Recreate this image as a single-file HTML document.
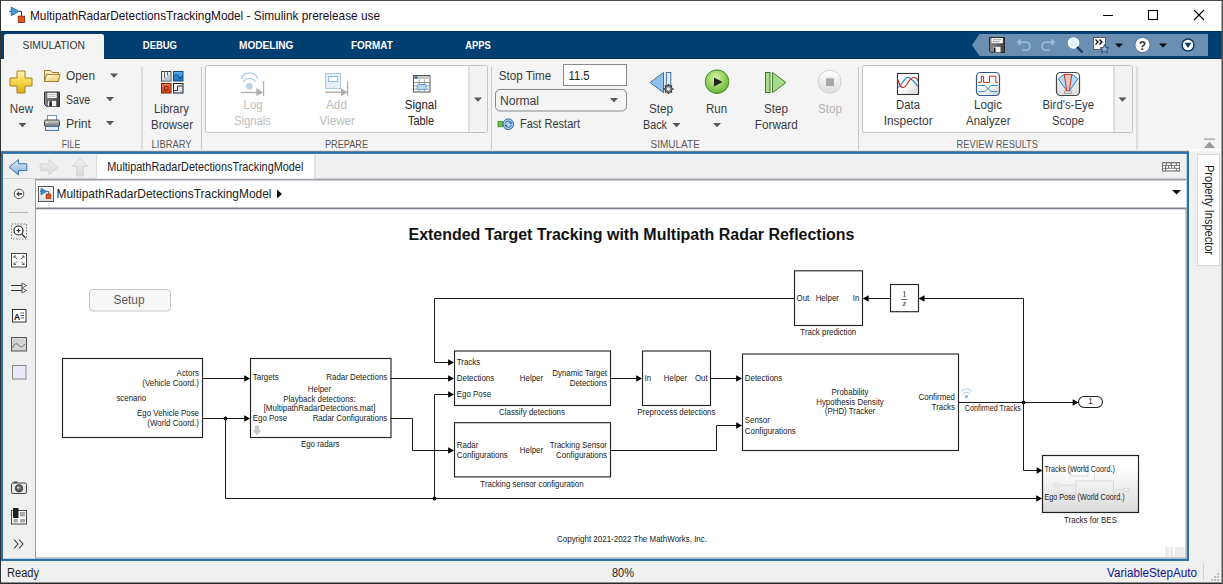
<!DOCTYPE html>
<html><head><meta charset="utf-8"><style>
html,body{margin:0;padding:0;width:1223px;height:584px;overflow:hidden;background:#f0f0f0}
svg{display:block;font-family:"Liberation Sans",sans-serif}
</style></head><body><svg width="1223" height="584" viewBox="0 0 1223 584" font-family="Liberation Sans, sans-serif"><rect x="0" y="0" width="1223" height="584" fill="#f0f0f0" stroke="none" stroke-width="1" rx="0" />
<rect x="0" y="0" width="1223" height="31" fill="#fff" stroke="none" stroke-width="1" rx="0" />
<rect x="0" y="0" width="1223" height="1" fill="#4a4a4a" stroke="none" stroke-width="1" rx="0" />
<path d="M9 11.4 H11" stroke="#444" stroke-width="1" fill="none" />
<path d="M11.2 7.2 L19 11.4 L11.2 15.6 Z" fill="#4a9ad8" stroke="#1a64a8" stroke-width="0.9"/>
<path d="M19 11.4 H21.5 V16" stroke="#333" stroke-width="1" fill="none" />
<rect x="18.3" y="16.2" width="6.3" height="6.3" fill="#e8581e" stroke="#8a2608" stroke-width="0.9" rx="0" />
<text x="30" y="20" font-size="12.6" fill="#1b0d18" text-anchor="start" font-weight="400" textLength="350" lengthAdjust="spacingAndGlyphs" >MultipathRadarDetectionsTrackingModel - Simulink prerelease use</text>
<rect x="1103" y="15" width="10" height="1" fill="#000" stroke="none" stroke-width="1" rx="0" />
<rect x="1148.5" y="10.5" width="9" height="9" fill="none" stroke="#000" stroke-width="1.1" rx="0" />
<path d="M1194 10 L1204 20 M1204 10 L1194 20" stroke="#000" stroke-width="1.1" fill="none" />
<rect x="0" y="31" width="1223" height="28" fill="#013e71" stroke="none" stroke-width="1" rx="0" />
<rect x="0" y="31" width="1223" height="1" fill="#00335f" stroke="none" stroke-width="1" rx="0" />
<rect x="0" y="58" width="1223" height="1" fill="#00345f" stroke="none" stroke-width="1" rx="0" />
<rect x="4" y="34" width="100" height="25" fill="#f4f4f4" stroke="none" stroke-width="1" rx="2" />
<rect x="4" y="50" width="100" height="9" fill="#f4f4f4" stroke="none" stroke-width="1" rx="0" />
<text x="22.5" y="48.7" font-size="10.8" fill="#333" text-anchor="start" font-weight="400" textLength="62.5" lengthAdjust="spacingAndGlyphs" >SIMULATION</text>
<text x="142.8" y="48.7" font-size="10.8" fill="#fff" text-anchor="start" font-weight="700" textLength="34.2" lengthAdjust="spacingAndGlyphs" >DEBUG</text>
<text x="239" y="48.7" font-size="10.8" fill="#fff" text-anchor="start" font-weight="700" textLength="54.4" lengthAdjust="spacingAndGlyphs" >MODELING</text>
<text x="351" y="48.7" font-size="10.8" fill="#fff" text-anchor="start" font-weight="700" textLength="41.7" lengthAdjust="spacingAndGlyphs" >FORMAT</text>
<text x="465.3" y="48.7" font-size="10.8" fill="#fff" text-anchor="start" font-weight="700" textLength="25.5" lengthAdjust="spacingAndGlyphs" >APPS</text>
<path d="M979.5 34 H1208 V56 H979.5 L972 45 Z" fill="#6a8fb0" />
<path d="M989.5 37.5 H1004.5 V52.5 H991 L989.5 51 Z" fill="url(#flpg)" stroke="#222" stroke-width="0.9"/>
<rect x="991.5" y="38" width="11.3" height="5.2" fill="#fafafa" stroke="none" stroke-width="1" rx="0" />
<path d="M993 39.7 H1001 M993 41.7 H999.5" stroke="#777" stroke-width="0.7" fill="none" />
<rect x="993" y="46.8" width="7.5" height="5.5" fill="#f0f0f0" stroke="none" stroke-width="1" rx="0" />
<rect x="993.6" y="47.5" width="1.9" height="4.8" fill="#111" stroke="none" stroke-width="1" rx="0" />
<path d="M1018 42.2 H1026 A4 4 0 0 1 1026 50.3 H1022" stroke="#9cc0de" stroke-width="1.6" fill="none" />
<path d="M1016.5 42.2 L1020.8 38.6 V45.8 Z" fill="#9cc0de" />
<path d="M1054 42.2 H1046 A4 4 0 0 0 1046 50.3 H1050" stroke="#9cc0de" stroke-width="1.6" fill="none" />
<path d="M1055.5 42.2 L1051.2 38.6 V45.8 Z" fill="#9cc0de" />
<circle cx="1073.5" cy="43" r="5" fill="#e8f0f8" stroke="#fff" stroke-width="1.6"/>
<path d="M1077 47 L1082.5 52.5" stroke="#1a3a66" stroke-width="2.4" fill="none" />
<rect x="1093.5" y="37.5" width="12" height="12" fill="#fff" stroke="#444" stroke-width="0.8" rx="0" />
<path d="M1095.5 39.5 L1098 42 L1095.5 44.5 M1099.5 39.5 L1102 42 L1099.5 44.5" stroke="#000" stroke-width="1.4" fill="none" />
<path d="M1104.5 44.5 L1105.8 47.6 L1109 47.8 L1106.5 49.8 L1107.5 53 L1104.5 51.1 L1101.5 53 L1102.5 49.8 L1100 47.8 L1103.2 47.6 Z" fill="#8fb4d8" stroke="#24446a" stroke-width="0.9"/>
<path d="M1115 43.5 H1123 L1119 47.5 Z" fill="#000" />
<circle cx="1142.5" cy="45" r="7.5" fill="#fff" stroke="#24446a" stroke-width="0.6"/>
<text x="1142.5" y="49.5" font-size="12" fill="#333" text-anchor="middle" font-weight="700" >?</text>
<path d="M1159 43.5 H1167 L1163 47.5 Z" fill="#000" />
<circle cx="1188" cy="45" r="6" fill="#fff" stroke="#0b3c6e" stroke-width="1.5"/>
<path d="M1184.5 42.8 H1191.5 L1188 48 Z" fill="#0b3c6e" />
<rect x="0" y="59" width="1223" height="93" fill="#f4f4f4" stroke="none" stroke-width="1" rx="0" />
<rect x="0" y="59" width="1" height="93" fill="#3a3a3a" stroke="none" stroke-width="1" rx="0" />
<rect x="141.5" y="67" width="1" height="83" fill="#c8c8c8" stroke="none" stroke-width="1" rx="0" />
<rect x="201" y="67" width="1" height="83" fill="#c8c8c8" stroke="none" stroke-width="1" rx="0" />
<rect x="491" y="67" width="1" height="83" fill="#c8c8c8" stroke="none" stroke-width="1" rx="0" />
<rect x="858" y="67" width="1" height="83" fill="#c8c8c8" stroke="none" stroke-width="1" rx="0" />
<rect x="1136.5" y="67" width="1" height="83" fill="#c8c8c8" stroke="none" stroke-width="1" rx="0" />
<text x="61.7" y="148" font-size="10.8" fill="#585858" text-anchor="start" font-weight="400" textLength="18.7" lengthAdjust="spacingAndGlyphs" >FILE</text>
<text x="151.6" y="148" font-size="10.8" fill="#585858" text-anchor="start" font-weight="400" textLength="40" lengthAdjust="spacingAndGlyphs" >LIBRARY</text>
<text x="325" y="148" font-size="10.8" fill="#585858" text-anchor="start" font-weight="400" textLength="43" lengthAdjust="spacingAndGlyphs" >PREPARE</text>
<text x="650.6" y="148" font-size="10.8" fill="#585858" text-anchor="start" font-weight="400" textLength="49.2" lengthAdjust="spacingAndGlyphs" >SIMULATE</text>
<text x="956.5" y="148" font-size="10.8" fill="#585858" text-anchor="start" font-weight="400" textLength="81.5" lengthAdjust="spacingAndGlyphs" >REVIEW RESULTS</text>
<defs><linearGradient id="plusg" x1="0" y1="0" x2="0" y2="1"><stop offset="0" stop-color="#fff6b8"/><stop offset="0.55" stop-color="#f5d240"/><stop offset="1" stop-color="#e0a818"/></linearGradient><linearGradient id="foldg" x1="0" y1="0" x2="1" y2="1"><stop offset="0" stop-color="#fffbe0"/><stop offset="1" stop-color="#e8c860"/></linearGradient><linearGradient id="prng" x1="0" y1="0" x2="0" y2="1"><stop offset="0" stop-color="#d8d8d8"/><stop offset="1" stop-color="#6a6a6a"/></linearGradient><linearGradient id="flpg" x1="0" y1="0" x2="1" y2="0"><stop offset="0" stop-color="#8a8a8a"/><stop offset="1" stop-color="#404040"/></linearGradient></defs>
<path d="M17 71 H25 V78 H32 V86 H25 V93 H17 V86 H10 V78 H17 Z" fill="url(#plusg)" stroke="#a8801a" stroke-width="1"/>
<text x="9.8" y="112.8" font-size="12" fill="#3a3a3a" text-anchor="start" font-weight="400" textLength="23.3" lengthAdjust="spacingAndGlyphs" >New</text>
<path d="M18.5 123 H26.5 L22.5 127.3 Z" fill="#555" />
<path d="M44.5 70.5 H50.5 L52.5 72.5 H58.5 V81.5 H44.5 Z" fill="#f4e6b0" stroke="#9a7a30" stroke-width="1"/>
<path d="M46.5 74.5 H60 L58.5 81.5 H44.5 Z" fill="url(#foldg)" stroke="#9a7a30" stroke-width="0.9"/>
<text x="66" y="80.3" font-size="12" fill="#3a3a3a" text-anchor="start" font-weight="400" textLength="29" lengthAdjust="spacingAndGlyphs" >Open</text>
<path d="M110 73.5 H118 L114 77.8 Z" fill="#555" />
<path d="M44.5 92 H59.5 V106.5 H46.5 L44.5 104.5 Z" fill="url(#flpg)" stroke="#333" stroke-width="1"/>
<rect x="47" y="92.5" width="10" height="5.8" fill="#fafafa" stroke="#555" stroke-width="0.6" rx="0" />
<path d="M48.5 94.3 H55.5 M48.5 96.3 H55.5" stroke="#999" stroke-width="0.7" fill="none" />
<rect x="47.5" y="100.5" width="9" height="6" fill="#f0f0f0" stroke="#444" stroke-width="0.6" rx="0" />
<rect x="49.3" y="101.3" width="2.6" height="5" fill="#222" stroke="none" stroke-width="1" rx="0" />
<text x="66" y="103.5" font-size="12" fill="#3a3a3a" text-anchor="start" font-weight="400" textLength="24" lengthAdjust="spacingAndGlyphs" >Save</text>
<path d="M106 97 H114 L110 101.3 Z" fill="#555" />
<rect x="47.5" y="115.5" width="9" height="5" fill="#fff" stroke="#6a90c0" stroke-width="0.9" rx="0" />
<rect x="44.5" y="120" width="15" height="6.5" fill="url(#prng)" stroke="#444" stroke-width="1" rx="1.5" />
<rect x="46" y="122" width="1.5" height="1" fill="#fff" stroke="none" stroke-width="1" rx="0" />
<rect x="45.5" y="126.5" width="13" height="4" fill="#dfeaf6" stroke="#3a6ab0" stroke-width="0.9" rx="0" />
<text x="66" y="127.5" font-size="12" fill="#3a3a3a" text-anchor="start" font-weight="400" textLength="25" lengthAdjust="spacingAndGlyphs" >Print</text>
<path d="M106 121 H114 L110 125.3 Z" fill="#555" />
<defs><linearGradient id="lbw" x1="0" y1="0" x2="1" y2="1"><stop offset="0" stop-color="#ffffff"/><stop offset="1" stop-color="#c8d4e0"/></linearGradient><linearGradient id="lbb" x1="0" y1="0" x2="0" y2="1"><stop offset="0" stop-color="#5ab0f0"/><stop offset="1" stop-color="#1a6cc0"/></linearGradient><linearGradient id="lbr" x1="0" y1="0" x2="0" y2="1"><stop offset="0" stop-color="#f08050"/><stop offset="1" stop-color="#d04010"/></linearGradient></defs>
<rect x="161.5" y="71.5" width="9.5" height="9.5" fill="url(#lbw)" stroke="#444" stroke-width="1" rx="0" />
<path d="M162 80.5 L170.5 74 V80.5 Z" fill="#b8c4d0" />
<path d="M164.5 72 V78 M167.5 72 V75.5" stroke="#444" stroke-width="0.8" fill="none" />
<rect x="173.5" y="71.5" width="9.5" height="9.5" fill="url(#lbb)" stroke="#0e4f8a" stroke-width="1" rx="0" />
<path d="M174.5 76.5 Q176.5 72.5 178.2 76.5 T182 76.5" stroke="#0a2a50" stroke-width="0.8" fill="none" />
<rect x="161.5" y="83.5" width="9.5" height="9.5" fill="url(#lbr)" stroke="#7a2008" stroke-width="1" rx="0" />
<rect x="164.5" y="86.5" width="3.5" height="3.5" fill="none" stroke="#7a2008" stroke-width="0.9" rx="0" />
<rect x="173.5" y="83.5" width="9.5" height="9.5" fill="url(#lbw)" stroke="#222" stroke-width="1" rx="0" />
<path d="M174 90.5 H177.5 V86 H182.5" stroke="#222" stroke-width="0.9" fill="none" />
<text x="154" y="113" font-size="12" fill="#3a3a3a" text-anchor="start" font-weight="400" textLength="35" lengthAdjust="spacingAndGlyphs" >Library</text>
<text x="151" y="128.8" font-size="12" fill="#3a3a3a" text-anchor="start" font-weight="400" textLength="42" lengthAdjust="spacingAndGlyphs" >Browser</text>
<rect x="205.5" y="65.5" width="282" height="67" fill="#fff" stroke="#c4c4c4" stroke-width="1" rx="2" />
<rect x="469" y="66" width="18" height="66" fill="#f3f3f3" stroke="none" stroke-width="1" rx="2.5" />
<rect x="468.5" y="66" width="1" height="66" fill="#c4c4c4" stroke="none" stroke-width="1" rx="0" />
<path d="M474 97.5 H482 L478 101.8 Z" fill="#555" />
<circle cx="249.4" cy="86.3" r="3.3" fill="#b8d4ec"/>
<path d="M241.2 78.8 A8.8 8.8 0 0 1 257.9 78.8" stroke="#a8cce8" stroke-width="1.3" fill="none" />
<path d="M243.4 82 A6.9 6.9 0 0 1 255.6 82" stroke="#a8cce8" stroke-width="1.3" fill="none" />
<path d="M241 92.5 H257" stroke="#b0b0b0" stroke-width="1.4" fill="none" />
<path d="M256.3 88 L263.2 92.4 L256.3 96 Z" fill="#b0b0b0" />
<rect x="263" y="81" width="1.2" height="15" fill="#b0b0b0" stroke="none" stroke-width="1" rx="0" />
<text x="243.6" y="109.2" font-size="12" fill="#bcbcbc" text-anchor="start" font-weight="400" textLength="19" lengthAdjust="spacingAndGlyphs" >Log</text>
<text x="234" y="125" font-size="12" fill="#bcbcbc" text-anchor="start" font-weight="400" textLength="37" lengthAdjust="spacingAndGlyphs" >Signals</text>
<rect x="325.5" y="73.5" width="15" height="15" fill="#e6eef6" stroke="#a9c8e4" stroke-width="1" rx="0" />
<rect x="328.5" y="76.5" width="9" height="5" fill="#fff" stroke="#8fbce4" stroke-width="1" rx="0" />
<path d="M325 92.3 H342" stroke="#b0b0b0" stroke-width="1.4" fill="none" />
<path d="M341 88.3 L347.5 92.3 L341 96.3 Z" fill="#b0b0b0" />
<rect x="347" y="81" width="1.2" height="15" fill="#b0b0b0" stroke="none" stroke-width="1" rx="0" />
<text x="326" y="109.2" font-size="12" fill="#bcbcbc" text-anchor="start" font-weight="400" textLength="21" lengthAdjust="spacingAndGlyphs" >Add</text>
<text x="319.5" y="125" font-size="12" fill="#bcbcbc" text-anchor="start" font-weight="400" textLength="35.5" lengthAdjust="spacingAndGlyphs" >Viewer</text>
<rect x="413.5" y="75.5" width="16.5" height="16.5" fill="#fff" stroke="#555" stroke-width="1" rx="0" />
<rect x="414" y="76" width="15.5" height="3" fill="#c8c8c8" stroke="none" stroke-width="1" rx="0" />
<rect x="414.5" y="76.5" width="3" height="2" fill="#1f5fb0" stroke="none" stroke-width="1" rx="0" />
<path d="M414 82.5 H430 M414 86 H430 M414 89.2 H430 M419.2 79.5 V92 M424.7 79.5 V92" stroke="#8c8c8c" stroke-width="0.9" fill="none" />
<rect x="417.3" y="84.5" width="8.7" height="5" fill="#b8d8f4" stroke="#5aa0e8" stroke-width="1" rx="1" />
<text x="404.8" y="109.2" font-size="12" fill="#222" text-anchor="start" font-weight="400" textLength="32" lengthAdjust="spacingAndGlyphs" >Signal</text>
<text x="408" y="125" font-size="12" fill="#222" text-anchor="start" font-weight="400" textLength="26" lengthAdjust="spacingAndGlyphs" >Table</text>
<text x="498.7" y="80.2" font-size="12" fill="#3a3a3a" text-anchor="start" font-weight="400" textLength="52.5" lengthAdjust="spacingAndGlyphs" >Stop Time</text>
<rect x="563.5" y="64.5" width="63" height="21" fill="#fff" stroke="#8a8a8a" stroke-width="1" rx="0" />
<text x="568.6" y="79.5" font-size="12.5" fill="#222" text-anchor="start" font-weight="400" textLength="21" lengthAdjust="spacingAndGlyphs" >11.5</text>
<rect x="495.5" y="89.5" width="131" height="21.5" fill="#f4f4f4" stroke="#7c7c7c" stroke-width="0.9" rx="4.5" />
<text x="500" y="105" font-size="12" fill="#3a3a3a" text-anchor="start" font-weight="400" textLength="39" lengthAdjust="spacingAndGlyphs" >Normal</text>
<path d="M610 98 H618 L614 102.3 Z" fill="#555" />
<rect x="498" y="121.6" width="4.5" height="5.2" fill="#6fc04a" stroke="#2f7a1e" stroke-width="0.7" rx="0" />
<circle cx="508.3" cy="124.2" r="5.3" fill="#a9d2f2" stroke="#2d5f9a" stroke-width="1"/>
<path d="M505 123.5 A3.3 3 0 0 1 511.3 123 M511.6 125 A3.3 3 0 0 1 505.3 125.4" stroke="#2d5f9a" stroke-width="0.9" fill="none" />
<path d="M510 121.3 L512.3 123.4 L509.6 124 Z" fill="#2d5f9a" />
<path d="M506.6 127.2 L504.3 125 L507 124.4 Z" fill="#2d5f9a" />
<text x="520" y="128.3" font-size="12" fill="#3a3a3a" text-anchor="start" font-weight="400" textLength="60" lengthAdjust="spacingAndGlyphs" >Fast Restart</text>
<path d="M650 82.5 L663.5 72.5 V92.6 Z" fill="#8ec2ea" stroke="#3f6f9a" stroke-width="1"/>
<rect x="666.3" y="72.5" width="4.5" height="16" fill="#dcecf8" stroke="#3f6f9a" stroke-width="1" rx="0" />
<path d="M671.70 89.00 L673.50 89.00 M670.76 91.26 L672.04 92.54 M668.50 92.20 L668.50 94.00 M666.24 91.26 L664.96 92.54 M665.30 89.00 L663.50 89.00 M666.24 86.74 L664.96 85.46 M668.50 85.80 L668.50 84.00 M670.76 86.74 L672.04 85.46 " stroke="#333" stroke-width="1.6" fill="none" />
<circle cx="668.5" cy="89" r="3.6" fill="#8a8a8a" stroke="#333" stroke-width="0.9"/>
<circle cx="668.5" cy="89" r="1.4" fill="#fff"/>
<text x="649" y="113" font-size="12" fill="#3a3a3a" text-anchor="start" font-weight="400" textLength="24" lengthAdjust="spacingAndGlyphs" >Step</text>
<text x="643" y="128.7" font-size="12" fill="#3a3a3a" text-anchor="start" font-weight="400" textLength="24" lengthAdjust="spacingAndGlyphs" >Back</text>
<path d="M672.5 123 H680.5 L676.5 127.3 Z" fill="#555" />
<defs><radialGradient id="rg" cx="0.45" cy="0.35" r="0.7"><stop offset="0" stop-color="#d9f5a8"/><stop offset="1" stop-color="#5fb32a"/></radialGradient><linearGradient id="lg1" x1="0" y1="0" x2="0" y2="1"><stop offset="0" stop-color="#ffffff"/><stop offset="1" stop-color="#dcdcdc"/></linearGradient><linearGradient id="bes" x1="0" y1="0" x2="0" y2="1"><stop offset="0" stop-color="#ffffff"/><stop offset="0.2" stop-color="#ffffff"/><stop offset="1" stop-color="#dadada"/></linearGradient></defs>
<circle cx="717" cy="81.7" r="11.8" fill="url(#rg)" stroke="#3f8a22" stroke-width="1"/>
<path d="M714 77.5 L722.5 82 L714 86.5 Z" fill="#222" />
<text x="706" y="113" font-size="12" fill="#3a3a3a" text-anchor="start" font-weight="400" textLength="21" lengthAdjust="spacingAndGlyphs" >Run</text>
<path d="M713 123 H721 L717 127.3 Z" fill="#555" />
<rect x="765.5" y="72.5" width="4.5" height="20" fill="#a8dc88" stroke="#3f7a2a" stroke-width="1" rx="0" />
<path d="M772.5 72.5 L786 82.5 L772.5 92.6 Z" fill="#a8dc88" stroke="#3f7a2a" stroke-width="1"/>
<text x="764" y="113" font-size="12" fill="#3a3a3a" text-anchor="start" font-weight="400" textLength="24" lengthAdjust="spacingAndGlyphs" >Step</text>
<text x="754.8" y="128.7" font-size="12" fill="#3a3a3a" text-anchor="start" font-weight="400" textLength="43" lengthAdjust="spacingAndGlyphs" >Forward</text>
<circle cx="829.7" cy="81.7" r="11.5" fill="url(#lg1)" stroke="#d0d0d0" stroke-width="1"/>
<rect x="826" y="78.3" width="8" height="7.7" fill="#a8a8a8" stroke="none" stroke-width="1" rx="0" />
<text x="818" y="113" font-size="12" fill="#b4b4b4" text-anchor="start" font-weight="400" textLength="24" lengthAdjust="spacingAndGlyphs" >Stop</text>
<rect x="862.5" y="65.5" width="270" height="67" fill="#fff" stroke="#c4c4c4" stroke-width="1" rx="2" />
<rect x="1114" y="66" width="18" height="66" fill="#f3f3f3" stroke="none" stroke-width="1" rx="2.5" />
<rect x="1113.5" y="66" width="1" height="66" fill="#c4c4c4" stroke="none" stroke-width="1" rx="0" />
<path d="M1118.5 97.5 H1126.5 L1122.5 101.8 Z" fill="#555" />
<defs><linearGradient id="dig" x1="0" y1="0" x2="1" y2="1"><stop offset="0" stop-color="#ffffff"/><stop offset="0.5" stop-color="#ffffff"/><stop offset="1" stop-color="#d0d0d0"/></linearGradient></defs>
<rect x="897.5" y="73.5" width="21" height="21" fill="url(#dig)" stroke="#333" stroke-width="1.1" rx="0" />
<path d="M898 87.3 C901 87, 904 77.3, 907.8 77.3 C911 77.3, 915 83, 918 86.4" stroke="#2f86d0" stroke-width="1.2" fill="none" />
<path d="M898 80 C899.5 86, 901 87.5, 903 87.5 C907 87.5, 909 77.5, 913.5 77.5 C916 77.5, 917.5 79.5, 918 81" stroke="#c0281c" stroke-width="1.2" fill="none" />
<text x="896" y="109.2" font-size="12" fill="#3a3a3a" text-anchor="start" font-weight="400" textLength="24" lengthAdjust="spacingAndGlyphs" >Data</text>
<text x="883.7" y="125" font-size="12" fill="#3a3a3a" text-anchor="start" font-weight="400" textLength="49" lengthAdjust="spacingAndGlyphs" >Inspector</text>
<rect x="976.5" y="72.5" width="23" height="23" fill="url(#dig)" stroke="#2a5a92" stroke-width="1.2" rx="4" />
<path d="M978.2 82.4 H981.3 V76.2 H983.6 V82.4 H989.5 V76.2 H995.8 V82.4 H997.7" stroke="#c8281e" stroke-width="1" fill="none" />
<path d="M978.2 85.5 H984.9 L991 91.6 H997.7 M978.2 91.6 H984.9 L991 85.5 H997.7" stroke="#2f86d0" stroke-width="1" fill="none" />
<text x="974" y="109.2" font-size="12" fill="#3a3a3a" text-anchor="start" font-weight="400" textLength="28" lengthAdjust="spacingAndGlyphs" >Logic</text>
<text x="966" y="125" font-size="12" fill="#3a3a3a" text-anchor="start" font-weight="400" textLength="44.5" lengthAdjust="spacingAndGlyphs" >Analyzer</text>
<defs><linearGradient id="beg" x1="0" y1="0" x2="0" y2="1"><stop offset="0" stop-color="#ffffff"/><stop offset="1" stop-color="#dcdcdc"/></linearGradient></defs>
<rect x="1056.5" y="72.5" width="23" height="23" fill="url(#beg)" stroke="#444" stroke-width="1.2" rx="4" />
<path d="M1058.3 78.8 L1063 75.3 H1073.5 L1077.8 78.8 L1069.5 90.8 H1066.8 Z" fill="#b4def8" stroke="#2a84d4" stroke-width="1"/>
<path d="M1064.3 74.5 H1071.8 L1069.3 90.8 H1066.8 Z" fill="#ecc4bc" stroke="#d43a22" stroke-width="1.1"/>
<rect x="1064.5" y="91" width="7" height="2.4" fill="#d8d8d8" stroke="#888" stroke-width="0.6" rx="0" />
<text x="1042.5" y="109.2" font-size="12" fill="#3a3a3a" text-anchor="start" font-weight="400" textLength="51.5" lengthAdjust="spacingAndGlyphs" >Bird's-Eye</text>
<text x="1052" y="125" font-size="12" fill="#3a3a3a" text-anchor="start" font-weight="400" textLength="32" lengthAdjust="spacingAndGlyphs" >Scope</text>
<path d="M1204 148 L1209.5 141.5 L1215 148 Z" fill="#999" />
<rect x="1204" y="138.5" width="11" height="1.2" fill="#999" stroke="none" stroke-width="1" rx="0" />
<rect x="0" y="149.5" width="1223" height="1.3" fill="#ffffff" stroke="none" stroke-width="1" rx="0" />
<rect x="1" y="150.8" width="1188" height="1" fill="#6e6e6e" stroke="none" stroke-width="1" rx="0" />
<rect x="1" y="151.7" width="1188" height="2.2" fill="#2a70aa" stroke="none" stroke-width="1" rx="0" />
<rect x="1" y="152" width="2" height="409" fill="#2a70aa" stroke="none" stroke-width="1" rx="0" />
<rect x="1186.5" y="152" width="2.5" height="409" fill="#2a70aa" stroke="none" stroke-width="1" rx="0" />
<rect x="1" y="558.5" width="1188" height="2.5" fill="#2a70aa" stroke="none" stroke-width="1" rx="0" />
<rect x="0" y="0" width="1" height="584" fill="#333" stroke="none" stroke-width="1" rx="0" />
<rect x="3" y="154" width="1183.5" height="25" fill="#f0f0f0" stroke="none" stroke-width="1" rx="0" />
<rect x="3" y="178" width="1183.5" height="1" fill="#d0d0d0" stroke="none" stroke-width="1" rx="0" />
<defs><linearGradient id="navg" x1="0" y1="0" x2="0" y2="1"><stop offset="0" stop-color="#e4f0fa"/><stop offset="1" stop-color="#80b0dc"/></linearGradient><linearGradient id="navd" x1="0" y1="0" x2="0" y2="1"><stop offset="0" stop-color="#f0f0f0"/><stop offset="1" stop-color="#d8d8d8"/></linearGradient></defs>
<path d="M9.2 167.3 L18.5 159.5 V163.8 H26.8 V170.6 H18.5 V175 Z" fill="url(#navg)" stroke="#3c70a8" stroke-width="1"/>
<path d="M58 167.3 L49 159.5 V163.8 H40.2 V170.6 H49 V175 Z" fill="url(#navd)" stroke="#d4d4d4" stroke-width="1"/>
<path d="M80 158 L88 166.5 H83.5 V176 H76.5 V166.5 H72 Z" fill="url(#navd)" stroke="#d4d4d4" stroke-width="1"/>
<rect x="96" y="155" width="218.5" height="23.5" fill="#fff" stroke="none" stroke-width="1" rx="0" />
<rect x="96" y="155" width="1" height="23" fill="#dcdcdc" stroke="none" stroke-width="1" rx="0" />
<rect x="314.5" y="155" width="1" height="23" fill="#d0d0d0" stroke="none" stroke-width="1" rx="0" />
<text x="107.3" y="171" font-size="12" fill="#222" text-anchor="start" font-weight="400" textLength="196" lengthAdjust="spacingAndGlyphs" >MultipathRadarDetectionsTrackingModel</text>
<rect x="1162" y="162" width="18" height="9.6" fill="#7a7a7a" stroke="none" stroke-width="1" rx="0" />
<rect x="1163" y="163.4" width="2.8" height="1.6" fill="#fff" stroke="none" stroke-width="1" rx="0" />
<rect x="1167" y="163.4" width="3.5" height="1.6" fill="#fff" stroke="none" stroke-width="1" rx="0" />
<rect x="1172" y="163.4" width="3.8" height="1.6" fill="#fff" stroke="none" stroke-width="1" rx="0" />
<rect x="1177" y="163.4" width="2" height="1.6" fill="#fff" stroke="none" stroke-width="1" rx="0" />
<rect x="1163" y="166" width="2" height="1.8" fill="#fff" stroke="none" stroke-width="1" rx="0" />
<rect x="1166.2" y="166" width="1.8" height="1.8" fill="#fff" stroke="none" stroke-width="1" rx="0" />
<rect x="1169" y="166" width="2" height="1.8" fill="#fff" stroke="none" stroke-width="1" rx="0" />
<rect x="1172" y="166" width="2" height="1.8" fill="#fff" stroke="none" stroke-width="1" rx="0" />
<rect x="1175.2" y="166" width="3.8" height="1.8" fill="#fff" stroke="none" stroke-width="1" rx="0" />
<rect x="1163" y="168.8" width="2" height="1.6" fill="#fff" stroke="none" stroke-width="1" rx="0" />
<rect x="1166.2" y="168.8" width="9.6" height="1.6" fill="#fff" stroke="none" stroke-width="1" rx="0" />
<rect x="1177" y="168.8" width="2" height="1.6" fill="#fff" stroke="none" stroke-width="1" rx="0" />
<rect x="3" y="179" width="32" height="379.5" fill="#f0f0f0" stroke="none" stroke-width="1" rx="0" />
<rect x="35" y="179" width="1" height="379.5" fill="#a0a0a0" stroke="none" stroke-width="1" rx="0" />
<rect x="36" y="179.5" width="1150.5" height="28.5" fill="#fff" stroke="none" stroke-width="1" rx="0" />
<rect x="36" y="179" width="1150.5" height="1.5" fill="#9aa0a8" stroke="none" stroke-width="1" rx="0" />
<rect x="36" y="207.5" width="1150.5" height="2" fill="#7c828c" stroke="none" stroke-width="1" rx="0" />
<rect x="38.5" y="186.5" width="15" height="15" fill="url(#beg)" stroke="#555" stroke-width="1" rx="0" />
<path d="M40 191.4 H41" stroke="#444" stroke-width="0.8" fill="none" />
<path d="M41 188.2 L46.7 191.4 L41 194.8 Z" fill="#3a90d8" stroke="#1a60a8" stroke-width="0.7"/>
<path d="M46.7 191.4 H48.6 V194" stroke="#333" stroke-width="0.8" fill="none" />
<rect x="46.2" y="194" width="4.6" height="4.6" fill="#e05a20" stroke="#8a2608" stroke-width="0.7" rx="0" />
<text x="56.5" y="198" font-size="12.8" fill="#222" text-anchor="start" font-weight="400" textLength="215" lengthAdjust="spacingAndGlyphs" >MultipathRadarDetectionsTrackingModel</text>
<path d="M277 189.5 L282 194 L277 198.5 Z" fill="#111" />
<path d="M1172 190 H1181 L1176.5 194.5 Z" fill="#111" />
<circle cx="19" cy="193.9" r="4.8" fill="#fafafa" stroke="#444" stroke-width="0.9"/>
<path d="M16.2 193.9 L19 191.3 V193 H22 V194.8 H19 V196.5 Z" fill="#444" />
<rect x="9" y="212" width="19" height="1" fill="#b8b8b8" stroke="none" stroke-width="1" rx="0" />
<rect x="11.5" y="224" width="15" height="15" fill="none" stroke="#555" stroke-width="0.8" rx="0" stroke-dasharray="1.5 1.5"/>
<circle cx="18.5" cy="230.5" r="4.5" fill="#fff" stroke="#222" stroke-width="1.2"/>
<path d="M16.5 230.5 H20.5 M18.5 228.5 V232.5 M21.8 234 L25.5 237.8" stroke="#222" stroke-width="1.2" fill="none" />
<rect x="11.5" y="253.5" width="15" height="13.5" fill="#fff" stroke="#444" stroke-width="1" rx="0" />
<path d="M14 256 L17 259 M14 256 H16 M14 256 V258 M24 256 L21 259 M24 256 H22 M24 256 V258 M14 264.5 L17 261.5 M14 264.5 H16 M14 264.5 V262.5 M24 264.5 L21 261.5 M24 264.5 H22 M24 264.5 V262.5" stroke="#444" stroke-width="0.8" fill="none" />
<path d="M11 285.5 H25 M11 290.5 H25" stroke="#333" stroke-width="1" fill="none" />
<path d="M22 283 L26.5 285.5 L22 288 Z" fill="#fff" stroke="#333" stroke-width="0.8"/>
<path d="M22 288 L26.5 290.5 L22 293 Z" fill="#fff" stroke="#333" stroke-width="0.8"/>
<rect x="12.5" y="309.5" width="13.5" height="12.5" fill="#fff" stroke="#333" stroke-width="1" rx="0" />
<text x="14" y="319.5" font-size="8.5" fill="#111" text-anchor="start" font-weight="700" >A</text>
<path d="M20.5 313 H24 M20.5 315.5 H24 M20.5 318 H24" stroke="#333" stroke-width="0.8" fill="none" />
<rect x="11.5" y="337.5" width="15" height="13.5" fill="#d4d4d4" stroke="#555" stroke-width="1" rx="0" />
<path d="M12.5 348 Q15.5 341 18.5 345 T25 344" stroke="#888" stroke-width="1.2" fill="none" />
<rect x="12.5" y="365.5" width="13.5" height="13.5" fill="#e8e8f8" stroke="#888" stroke-width="1" rx="0" />
<rect x="11.5" y="483" width="15" height="10.5" fill="#e8e8e8" stroke="#444" stroke-width="1" rx="1.5" />
<rect x="13.5" y="481.5" width="4" height="1.5" fill="#444" stroke="none" stroke-width="1" rx="0" />
<circle cx="19" cy="488.3" r="3.6" fill="#666" stroke="#333" stroke-width="1"/>
<circle cx="18.3" cy="487.6" r="1.2" fill="#ddd"/>
<rect x="11.5" y="510.5" width="15" height="13.5" fill="#fff" stroke="#444" stroke-width="1" rx="0" />
<rect x="13" y="508" width="5.5" height="10" fill="#222" stroke="none" stroke-width="1" rx="0" />
<rect x="20" y="512" width="5" height="4.5" fill="#aaa" stroke="none" stroke-width="1" rx="0" />
<rect x="13.5" y="519" width="4.5" height="3.5" fill="#aaa" stroke="none" stroke-width="1" rx="0" />
<rect x="20" y="519" width="5" height="3.5" fill="#aaa" stroke="none" stroke-width="1" rx="0" />
<path d="M14 539.5 L18 544 L14 548.5 M19 539.5 L23 544 L19 548.5" stroke="#333" stroke-width="1.1" fill="none" />
<rect x="36" y="209.5" width="1150.5" height="349" fill="#fff" stroke="none" stroke-width="1" rx="0" />
<rect x="1185.5" y="208" width="1" height="350" fill="#9a9a9a" stroke="none" stroke-width="1" rx="0" />
<rect x="36" y="557.5" width="1150.5" height="1" fill="#9a9a9a" stroke="none" stroke-width="1" rx="0" />
<rect x="1165" y="547" width="4" height="10" fill="#ececec" stroke="none" stroke-width="1" rx="0" />
<rect x="1170" y="547" width="3" height="10" fill="#ececec" stroke="none" stroke-width="1" rx="0" />
<rect x="1175" y="547" width="9.6" height="10" fill="#ececec" stroke="none" stroke-width="1" rx="0" />
<rect x="1189" y="152" width="33" height="408" fill="#f0f0f0" stroke="none" stroke-width="1" rx="0" />
<rect x="1197.5" y="154.5" width="22" height="111" fill="#fff" stroke="#d8d8d8" stroke-width="1" rx="0" />
<text x="0" y="0" font-size="12" fill="#222" transform="translate(1204.5,165) rotate(90)" textLength="90" lengthAdjust="spacingAndGlyphs">Property Inspector</text>
<rect x="0" y="561" width="1223" height="21" fill="#f0f0f0" stroke="none" stroke-width="1" rx="0" />
<text x="7" y="576.6" font-size="12.5" fill="#222" text-anchor="start" font-weight="400" textLength="32" lengthAdjust="spacingAndGlyphs" >Ready</text>
<text x="612" y="576.6" font-size="12.5" fill="#222" text-anchor="start" font-weight="400" textLength="22" lengthAdjust="spacingAndGlyphs" >80%</text>
<text x="1107" y="577" font-size="12.5" fill="#10109a" text-anchor="start" font-weight="400" textLength="90" lengthAdjust="spacingAndGlyphs" >VariableStepAuto</text>
<rect x="1203" y="563" width="1" height="17" fill="#d0d0d0" stroke="none" stroke-width="1" rx="0" />
<rect x="1217" y="573" width="2" height="2" fill="#bdbdbd" stroke="none" stroke-width="1" rx="0" />
<rect x="1217" y="576" width="2" height="2" fill="#bdbdbd" stroke="none" stroke-width="1" rx="0" />
<rect x="1214" y="576" width="2" height="2" fill="#bdbdbd" stroke="none" stroke-width="1" rx="0" />
<rect x="1217" y="579" width="2" height="2" fill="#bdbdbd" stroke="none" stroke-width="1" rx="0" />
<rect x="1214" y="579" width="2" height="2" fill="#bdbdbd" stroke="none" stroke-width="1" rx="0" />
<rect x="1211" y="579" width="2" height="2" fill="#bdbdbd" stroke="none" stroke-width="1" rx="0" />
<rect x="0" y="582.5" width="1223" height="1.5" fill="#2a2a2a" stroke="none" stroke-width="1" rx="0" />
<rect x="1221.5" y="0" width="1.5" height="584" fill="#555" stroke="none" stroke-width="1" rx="0" />
<rect x="0" y="0" width="1" height="584" fill="#333" stroke="none" stroke-width="1" rx="0" />
<text x="408.5" y="240" font-size="15.8" fill="#111" text-anchor="start" font-weight="700" textLength="446" lengthAdjust="spacingAndGlyphs" >Extended Target Tracking with Multipath Radar Reflections</text>
<rect x="89.5" y="289.5" width="81" height="21.5" fill="#f7f7f7" stroke="#c8c8c8" stroke-width="1" rx="3.5" />
<text x="113.5" y="303.7" font-size="13" fill="#5a5a5a" text-anchor="start" font-weight="400" textLength="31" lengthAdjust="spacingAndGlyphs" >Setup</text>
<rect x="62.5" y="358.5" width="140" height="79" fill="#fff" stroke="#262626" stroke-width="1.15" rx="0" />
<text transform="translate(199 375.8) scale(1 1.08)" x="0" y="0" font-size="7.90" fill="#222" text-anchor="end" font-weight="400" >Actors</text>
<text transform="translate(199 386.2) scale(1 1.08)" x="0" y="0" font-size="7.90" fill="#222" text-anchor="end" font-weight="400" >(Vehicle Coord.)</text>
<text transform="translate(116.4 400.9) scale(1 1.08)" x="0" y="0" font-size="7.90" fill="#222" text-anchor="start" font-weight="400" >scenario</text>
<text transform="translate(199 415.7) scale(1 1.08)" x="0" y="0" font-size="7.90" fill="#222" text-anchor="end" font-weight="400" >Ego Vehicle Pose</text>
<text transform="translate(199 426.2) scale(1 1.08)" x="0" y="0" font-size="7.90" fill="#222" text-anchor="end" font-weight="400" >(World Coord.)</text>
<rect x="250.5" y="358.5" width="140.5" height="79" fill="#fff" stroke="#262626" stroke-width="1.15" rx="0" />
<text transform="translate(252.8 380.2) scale(1 1.08)" x="0" y="0" font-size="7.90" fill="#222" text-anchor="start" font-weight="400" >Targets</text>
<text transform="translate(387.3 380.2) scale(1 1.08)" x="0" y="0" font-size="7.90" fill="#222" text-anchor="end" font-weight="400" textLength="61.00" lengthAdjust="spacingAndGlyphs" >Radar Detections</text>
<text transform="translate(319.5 391.59999999999997) scale(1 1.08)" x="0" y="0" font-size="7.90" fill="#222" text-anchor="middle" font-weight="400" >Helper</text>
<text transform="translate(319.5 401.9) scale(1 1.08)" x="0" y="0" font-size="7.90" fill="#222" text-anchor="middle" font-weight="400" >Playback detections:</text>
<text transform="translate(319.5 411.0) scale(1 1.08)" x="0" y="0" font-size="7.90" fill="#222" text-anchor="middle" font-weight="400" textLength="111.70" lengthAdjust="spacingAndGlyphs" >[MultipathRadarDetections.mat]</text>
<text transform="translate(252.8 420.8) scale(1 1.08)" x="0" y="0" font-size="7.90" fill="#222" text-anchor="start" font-weight="400" >Ego Pose</text>
<text transform="translate(387.3 420.8) scale(1 1.08)" x="0" y="0" font-size="7.90" fill="#222" text-anchor="end" font-weight="400" >Radar Configurations</text>
<path d="M255 425.5 H259 V430 H261.5 L257 435.5 L252.5 430 H255 Z" fill="#c8c8c8" />
<text transform="translate(320.2 446.7) scale(1 1.08)" x="0" y="0" font-size="7.90" fill="#222" text-anchor="middle" font-weight="400" >Ego radars</text>
<rect x="454.5" y="351.0" width="156" height="54.5" fill="#fff" stroke="#262626" stroke-width="1.15" rx="0" />
<text transform="translate(456.8 365.0) scale(1 1.08)" x="0" y="0" font-size="7.90" fill="#222" text-anchor="start" font-weight="400" >Tracks</text>
<text transform="translate(456.8 380.5) scale(1 1.08)" x="0" y="0" font-size="7.90" fill="#222" text-anchor="start" font-weight="400" >Detections</text>
<text transform="translate(456.8 396.5) scale(1 1.08)" x="0" y="0" font-size="7.90" fill="#222" text-anchor="start" font-weight="400" >Ego Pose</text>
<text transform="translate(531.5 380.5) scale(1 1.08)" x="0" y="0" font-size="7.90" fill="#222" text-anchor="middle" font-weight="400" >Helper</text>
<text transform="translate(607 376.0) scale(1 1.08)" x="0" y="0" font-size="7.90" fill="#222" text-anchor="end" font-weight="400" >Dynamic Target</text>
<text transform="translate(607 385.5) scale(1 1.08)" x="0" y="0" font-size="7.90" fill="#222" text-anchor="end" font-weight="400" >Detections</text>
<text transform="translate(532 415.0) scale(1 1.08)" x="0" y="0" font-size="7.90" fill="#222" text-anchor="middle" font-weight="400" >Classify detections</text>
<rect x="454.5" y="422.7" width="156" height="54.2" fill="#fff" stroke="#262626" stroke-width="1.15" rx="0" />
<text transform="translate(456.8 448.0) scale(1 1.08)" x="0" y="0" font-size="7.90" fill="#222" text-anchor="start" font-weight="400" >Radar</text>
<text transform="translate(456.8 457.59999999999997) scale(1 1.08)" x="0" y="0" font-size="7.90" fill="#222" text-anchor="start" font-weight="400" >Configurations</text>
<text transform="translate(531.5 453.2) scale(1 1.08)" x="0" y="0" font-size="7.90" fill="#222" text-anchor="middle" font-weight="400" >Helper</text>
<text transform="translate(607 447.8) scale(1 1.08)" x="0" y="0" font-size="7.90" fill="#222" text-anchor="end" font-weight="400" >Tracking Sensor</text>
<text transform="translate(607 457.59999999999997) scale(1 1.08)" x="0" y="0" font-size="7.90" fill="#222" text-anchor="end" font-weight="400" >Configurations</text>
<text transform="translate(532 487.0) scale(1 1.08)" x="0" y="0" font-size="7.90" fill="#222" text-anchor="middle" font-weight="400" >Tracking sensor configuration</text>
<rect x="642.5" y="351.0" width="68" height="54.5" fill="#fff" stroke="#262626" stroke-width="1.15" rx="0" />
<text transform="translate(644.5 380.5) scale(1 1.08)" x="0" y="0" font-size="7.90" fill="#222" text-anchor="start" font-weight="400" >In</text>
<text transform="translate(675.5 380.5) scale(1 1.08)" x="0" y="0" font-size="7.90" fill="#222" text-anchor="middle" font-weight="400" >Helper</text>
<text transform="translate(707.7 380.5) scale(1 1.08)" x="0" y="0" font-size="7.90" fill="#222" text-anchor="end" font-weight="400" >Out</text>
<text transform="translate(676.3 415.0) scale(1 1.08)" x="0" y="0" font-size="7.90" fill="#222" text-anchor="middle" font-weight="400" >Preprocess detections</text>
<rect x="742.5" y="354.0" width="216" height="96.5" fill="#fff" stroke="#262626" stroke-width="1.15" rx="0" />
<text transform="translate(744.8 380.59999999999997) scale(1 1.08)" x="0" y="0" font-size="7.90" fill="#222" text-anchor="start" font-weight="400" >Detections</text>
<text transform="translate(744.8 423.4) scale(1 1.08)" x="0" y="0" font-size="7.90" fill="#222" text-anchor="start" font-weight="400" >Sensor</text>
<text transform="translate(744.8 433.59999999999997) scale(1 1.08)" x="0" y="0" font-size="7.90" fill="#222" text-anchor="start" font-weight="400" >Configurations</text>
<text transform="translate(850 394.5) scale(1 1.08)" x="0" y="0" font-size="7.90" fill="#222" text-anchor="middle" font-weight="400" >Probability</text>
<text transform="translate(850 404.5) scale(1 1.08)" x="0" y="0" font-size="7.90" fill="#222" text-anchor="middle" font-weight="400" >Hypothesis Density</text>
<text transform="translate(850 413.8) scale(1 1.08)" x="0" y="0" font-size="7.90" fill="#222" text-anchor="middle" font-weight="400" >(PHD) Tracker</text>
<text transform="translate(955 399.59999999999997) scale(1 1.08)" x="0" y="0" font-size="7.90" fill="#222" text-anchor="end" font-weight="400" >Confirmed</text>
<text transform="translate(955 409.59999999999997) scale(1 1.08)" x="0" y="0" font-size="7.90" fill="#222" text-anchor="end" font-weight="400" >Tracks</text>
<rect x="794.5" y="270.8" width="68" height="54.7" fill="#fff" stroke="#262626" stroke-width="1.15" rx="0" />
<text transform="translate(796.5 300.8) scale(1 1.08)" x="0" y="0" font-size="7.90" fill="#222" text-anchor="start" font-weight="400" >Out</text>
<text transform="translate(827.3 300.8) scale(1 1.08)" x="0" y="0" font-size="7.90" fill="#222" text-anchor="middle" font-weight="400" >Helper</text>
<text transform="translate(859.4 300.8) scale(1 1.08)" x="0" y="0" font-size="7.90" fill="#222" text-anchor="end" font-weight="400" >In</text>
<text transform="translate(828.3 335.0) scale(1 1.08)" x="0" y="0" font-size="7.90" fill="#222" text-anchor="middle" font-weight="400" >Track prediction</text>
<rect x="890.5" y="284.5" width="28" height="27.2" fill="#fff" stroke="#262626" stroke-width="1.15" rx="0" />
<text x="904.3" y="297" font-size="8.5" fill="#222" text-anchor="middle" font-weight="400" font-family="Liberation Serif">1</text>
<rect x="901.3" y="299" width="6" height="0.7" fill="#333" stroke="none" stroke-width="1" rx="0" />
<text x="904.3" y="306" font-size="8.5" fill="#222" text-anchor="middle" font-weight="400" font-family="Liberation Serif" font-style="italic">z</text>
<rect x="1078.5" y="396.5" width="24" height="11" fill="#fff" stroke="#222" stroke-width="1.1" rx="5.5" />
<text transform="translate(1090.5 404.0) scale(1 1.08)" x="0" y="0" font-size="7.90" fill="#222" text-anchor="middle" font-weight="400" >1</text>
<rect x="1042.5" y="455.5" width="96" height="57" fill="url(#bes)" stroke="#222" stroke-width="1.2" rx="0" />
<rect x="1076" y="481" width="37.5" height="13.8" fill="none" stroke="#d4d4d4" stroke-width="0.8" rx="0" />
<rect x="1070.5" y="467.5" width="17.5" height="8.5" fill="none" stroke="#d4d4d4" stroke-width="0.8" rx="0" />
<path d="M1094.5 481 V472.5 M1060.5 485.3 H1076 M1060.5 494 H1076 M1113.5 489.7 H1123" stroke="#d4d4d4" stroke-width="0.8" fill="none" />
<rect x="1054" y="484" width="6.3" height="2.6" fill="none" stroke="#d4d4d4" stroke-width="0.8" rx="1.3" />
<rect x="1054" y="492.7" width="6.3" height="2.6" fill="none" stroke="#d4d4d4" stroke-width="0.8" rx="1.3" />
<rect x="1123.2" y="488.4" width="5.8" height="3" fill="none" stroke="#d4d4d4" stroke-width="0.8" rx="0" />
<text transform="translate(1044.4 472.0) scale(1 1.08)" x="0" y="0" font-size="7.90" fill="#222" text-anchor="start" font-weight="400" textLength="70.40" lengthAdjust="spacingAndGlyphs" >Tracks (World Coord.)</text>
<text transform="translate(1044.4 500.0) scale(1 1.08)" x="0" y="0" font-size="7.90" fill="#222" text-anchor="start" font-weight="400" textLength="80.20" lengthAdjust="spacingAndGlyphs" >Ego Pose (World Coord.)</text>
<text transform="translate(1090.5 522.6) scale(1 1.08)" x="0" y="0" font-size="7.90" fill="#222" text-anchor="middle" font-weight="400" >Tracks for BES</text>
<circle cx="966.6" cy="396.6" r="1.6" fill="#8ab8e0"/>
<path d="M961 391.5 A7.5 7.5 0 0 1 972.2 391.5 M963 394 A4.6 4.6 0 0 1 970.2 394" stroke="#9cc4e6" stroke-width="0.9" fill="none" />
<text transform="translate(964.8 410.5) scale(1 1.08)" x="0" y="0" font-size="7.90" fill="#222" text-anchor="start" font-weight="400" textLength="56.00" lengthAdjust="spacingAndGlyphs" >Confirmed Tracks</text>
<text transform="translate(557 542.2) scale(1 1.08)" x="0" y="0" font-size="7.90" fill="#222" text-anchor="start" font-weight="400" textLength="150.00" lengthAdjust="spacingAndGlyphs" >Copyright 2021-2022 The MathWorks, Inc.</text>
<path d="M202.5 378.5 H245" stroke="#1a1a1a" stroke-width="1.0" fill="none" />
<path d="M244.2 375.3 L250 378.5 L244.2 381.7 Z" fill="#000" />
<path d="M202.5 418.5 H245" stroke="#1a1a1a" stroke-width="1.0" fill="none" />
<path d="M244.2 415.3 L250 418.5 L244.2 421.7 Z" fill="#000" />
<circle cx="225.5" cy="418.5" r="1.9" fill="#000"/>
<path d="M225.5 418.5 V498.5 H1037" stroke="#1a1a1a" stroke-width="1.0" fill="none" />
<path d="M1036.2 495.3 L1042 498.5 L1036.2 501.7 Z" fill="#000" />
<circle cx="434.5" cy="498.5" r="1.9" fill="#000"/>
<path d="M434.5 498.5 V394.5 H449" stroke="#1a1a1a" stroke-width="1.0" fill="none" />
<path d="M448.2 391.3 L454 394.5 L448.2 397.7 Z" fill="#000" />
<path d="M390.5 378.5 H449" stroke="#1a1a1a" stroke-width="1.0" fill="none" />
<path d="M448.2 375.3 L454 378.5 L448.2 381.7 Z" fill="#000" />
<path d="M390.5 418.5 H412.5 V450.5 H449" stroke="#1a1a1a" stroke-width="1.0" fill="none" />
<path d="M448.2 447.3 L454 450.5 L448.2 453.7 Z" fill="#000" />
<path d="M794 298.5 H434.5 V362.5 H449" stroke="#1a1a1a" stroke-width="1.0" fill="none" />
<path d="M448.2 359.3 L454 362.5 L448.2 365.7 Z" fill="#000" />
<path d="M610.5 378.5 H637" stroke="#1a1a1a" stroke-width="1.0" fill="none" />
<path d="M636.2 375.3 L642 378.5 L636.2 381.7 Z" fill="#000" />
<path d="M710.5 378.5 H737" stroke="#1a1a1a" stroke-width="1.0" fill="none" />
<path d="M736.2 375.3 L742 378.5 L736.2 381.7 Z" fill="#000" />
<path d="M610.5 450.5 H716.5 V425.5 H737" stroke="#1a1a1a" stroke-width="1.0" fill="none" />
<path d="M736.2 422.3 L742 425.5 L736.2 428.7 Z" fill="#000" />
<path d="M958.5 402.5 H1073.5" stroke="#1a1a1a" stroke-width="1.0" fill="none" />
<path d="M1072.7 399.3 L1078.5 402.5 L1072.7 405.7 Z" fill="#000" />
<circle cx="1023.5" cy="402.5" r="1.9" fill="#000"/>
<path d="M1023.5 298.5 V470.5 H1037" stroke="#1a1a1a" stroke-width="1.0" fill="none" />
<path d="M1036.7 467.3 L1042.5 470.5 L1036.7 473.7 Z" fill="#000" />
<path d="M1023.5 298.5 H923.7" stroke="#1a1a1a" stroke-width="1.0" fill="none" />
<path d="M924.5 295.3 L918.7 298.5 L924.5 301.7 Z" fill="#000" />
<path d="M890.2 298.5 H867.8" stroke="#1a1a1a" stroke-width="1.0" fill="none" />
<path d="M868.5999999999999 295.3 L862.8 298.5 L868.5999999999999 301.7 Z" fill="#000" /></svg></body></html>
